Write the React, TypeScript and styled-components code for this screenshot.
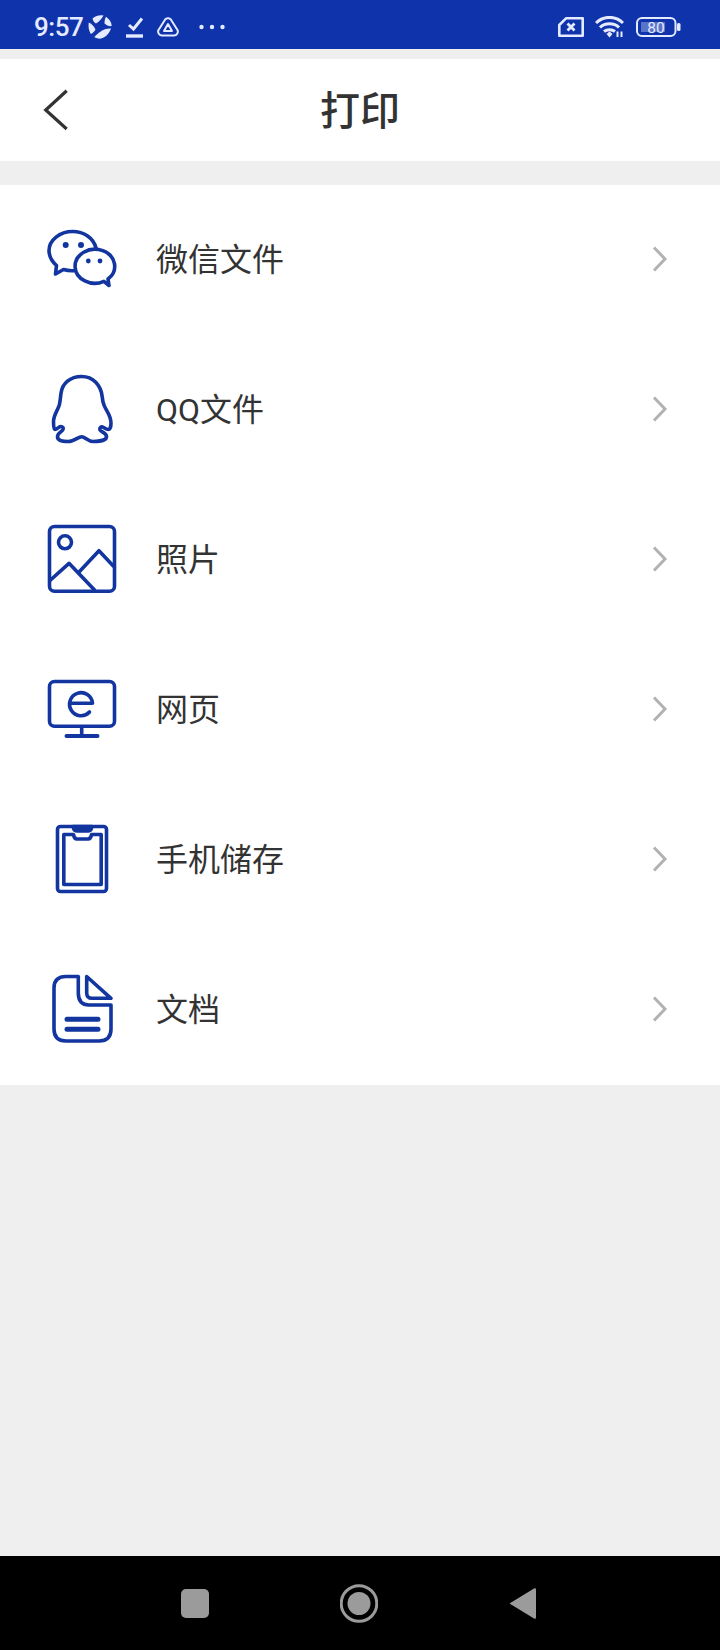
import styled, { createGlobalStyle } from "styled-components";
import { ReactNode } from "react";

const GlobalStyle = createGlobalStyle`
    html, body {
        margin: 0;
        padding: 0;
        background: #efefef;
    }
    * {
        box-sizing: border-box;
    }
`;

const Page = styled.div`
    width: 720px;
    height: 1650px;
    display: flex;
    flex-direction: column;
    background: #efefef;
    font-family: "Noto Sans CJK SC", "Noto Sans", sans-serif;
`;

const StatusBar = styled.div`
    height: 49px;
    flex-shrink: 0;
    display: flex;
    align-items: center;
    justify-content: space-between;
    padding: 4px 39px 0 34px;
    background: #0e33ab;
    color: #e4eaff;
`;

const StatusGroup = styled.div`
    display: flex;
    align-items: center;
`;

const Time = styled.span`
    font-family: Roboto, sans-serif;
    font-size: 26px;
    font-weight: 500;
    letter-spacing: -0.5px;
    margin-right: 5px;
`;

const StatusIcon = styled.svg<{ $gap?: number }>`
    display: block;
    flex-shrink: 0;
    margin-right: ${(p) => p.$gap ?? 0}px;
`;

const Header = styled.header`
    margin-top: 10px;
    height: 102px;
    flex-shrink: 0;
    display: grid;
    grid-template-columns: 1fr auto 1fr;
    align-items: center;
    background: #fff;
`;

const BackButton = styled.button`
    width: 40px;
    height: 50px;
    margin-left: 40px;
    padding: 0;
    border: 0;
    background: none;
`;

const Title = styled.h1`
    margin: 0 0 4px;
    color: #333;
    font-size: 40px;
    font-weight: 500;
    line-height: 1;
`;

const List = styled.div`
    margin-top: 24px;
    background: #fff;
`;

const Row = styled.div`
    height: 150px;
    display: flex;
    align-items: center;
    padding: 0 50px 2px 44px;
`;

const IconBox = styled.svg`
    width: 76px;
    height: 76px;
    flex-shrink: 0;
    fill: none;
    stroke: #12359f;
    stroke-width: 3.6;
    stroke-linecap: round;
    stroke-linejoin: round;
`;

const Label = styled.span`
    flex: 1;
    margin-left: 36px;
    padding-bottom: 4px;
    color: #333;
    font-family: Roboto, "Noto Sans CJK SC", sans-serif;
    font-size: 32px;
    font-weight: 400;
`;

const Chevron = styled.svg`
    width: 20px;
    height: 30px;
    fill: none;
    stroke: #b2b2b2;
    stroke-width: 3;
`;

const Spacer = styled.div`
    flex: 1;
`;

const NavBar = styled.nav`
    height: 94px;
    flex-shrink: 0;
    display: flex;
    align-items: center;
    gap: 131px;
    padding-left: 181px;
    background: #000;
`;

const NavIcon = styled.svg`
    display: block;
    fill: #9b9b9b;
`;

const Dot = styled.circle`
    fill: #12359f;
    stroke: none;
`;

const rows: { label: string; icon: ReactNode }[] = [
    {
        label: "微信文件",
        icon: (
            <>
                <path d="M52 27C49.500 17 40 10.500 28.500 10.500C16 10.500 5 19 5 29.500C5 35.500 7.500 40 12.500 44.500L11.500 53L19.500 48.500C23 49.500 27 50 31 49.500" />
                <path d="M59.900 60.400A19.800 17 0 1 1 64 58L65 64.500Z" />
                <Dot cx="21.700" cy="24" r="3" />
                <Dot cx="37" cy="24" r="3" />
                <Dot cx="44.300" cy="40" r="2.400" />
                <Dot cx="56" cy="40" r="2.400" />
            </>
        ),
    },
    {
        label: "QQ文件",
        icon: (
            <path d="M37.700 5.500C49 5.500 57 14 58.200 25.700C58.500 29 59 31.500 60 34C62 40 67 44 67 52.300C67 56 65.800 58.500 64.300 58.500C61.500 58.500 60 56 57.700 55.700C56 56 55.600 57.500 56 59C57 61 62.500 61.500 62.500 65.700C62.500 69 56 70.500 49.300 70.500C44 70.500 41 65.700 37.700 65.700C34 65.700 30.500 70.500 24.300 70.500C18 70.500 13.500 69.500 13.500 65.700C13.500 61.500 19.500 60.500 19.300 57.300C19 55.800 17.500 55.300 16 55.700C14 56.500 12.800 58.500 11 58.500C10 58.500 9.500 55 9.500 50.700C9.500 44 13.500 40 15.300 34C16.300 30 16.300 27 17 22.300C18.300 12.500 26 5.500 37.700 5.500Z" />
        ),
    },
    {
        label: "照片",
        icon: (
            <>
                <rect x="5.500" y="5.500" width="65" height="64.700" rx="5" />
                <circle cx="21" cy="21.300" r="6.500" />
                <path d="M6.500 59L25 42.300L50.500 69" />
                <path d="M35.300 50.700L55 29.700L69.300 45" />
            </>
        ),
    },
    {
        label: "网页",
        icon: (
            <>
                <rect x="5.500" y="10.500" width="65" height="44.700" rx="5" />
                <path d="M25.500 32.300H48.500A11.500 11.500 0 1 0 45.500 41" />
                <path d="M37.700 55.700V65" />
                <path d="M22.500 65H53.500" strokeWidth="4" />
            </>
        ),
    },
    {
        label: "手机储存",
        icon: (
            <>
                <rect x="13.500" y="5.500" width="49" height="65" rx="3" />
                <path d="M19.800 13.500H29.500Q30 18 33 18H44Q47 18 47.500 13.500H57.200V63.500H19.800Z" />
                <path d="M29 5.500H48Q47 10 44 10H33Q30 10 29 5.500Z" fill="#12359f" />
            </>
        ),
    },
    {
        label: "文档",
        icon: (
            <>
                <path d="M34.300 5.500H22Q10 5.500 10 17V58Q10 70 22 70H55Q67 70 67 58V34H45Q34.300 34 34.300 22Z" />
                <path d="M42.700 5.500L67 27.300H48Q42.700 27.300 42.700 22Z" />
                <path d="M23 48.300H54M23 58.300H54" strokeWidth="5" />
            </>
        ),
    },
];

function App() {
    return (
        <Page>
            <GlobalStyle />
            <StatusBar>
                <StatusGroup>
                    <Time>9:57</Time>
                    <StatusIcon $gap={14} width="24" height="24" viewBox="0 0 24 24" fill="currentColor">
                        <path d="M4.500 3.500C8 .6 12 -.2 15.500 .6C14 3.500 11 7 8 8.500C6.500 8 5 6 4.500 3.500Z" />
                        <path d="M18 1.800C21.500 4 23.500 7.500 23.700 11C21.500 11.500 18.500 10.500 16.500 8.500C16.500 6 17 3.500 18 1.800Z" />
                        <path d="M.8 7.500C3 8.500 6 11 7.500 14.500C6.500 16.500 4.500 18.500 2.800 19C.8 15.500 0 11.500 .8 7.500Z" />
                        <path d="M23 13.500C21.500 18.500 17 23 12 23.700C10 23.700 8 23.200 6.300 22C9 19 13 15.500 17.500 14C19.500 13.500 21.500 13.300 23 13.500Z" />
                    </StatusIcon>
                    <StatusIcon $gap={13} width="18" height="22" viewBox="0 0 18 22" fill="none" stroke="currentColor" strokeWidth="3">
                        <path d="M3 9L7.500 13L16 2.500" />
                        <path d="M0 20H17" strokeWidth="3.400" />
                    </StatusIcon>
                    <StatusIcon $gap={20} width="22" height="20" viewBox="0 0 22 20" fill="none" stroke="currentColor" strokeWidth="2" strokeLinejoin="round">
                        <path d="M8.500 2Q11 .5 13.500 2L20.500 13Q21.500 15 20 17Q19 18.500 17 18.500H5Q3 18.500 2 17Q.5 15 1.500 13Z" />
                        <path d="M11 7L15 14H7Z" />
                    </StatusIcon>
                    <StatusIcon width="26" height="6" viewBox="0 0 26 6" fill="currentColor">
                        <circle cx="2.500" cy="3" r="2.200" />
                        <circle cx="13" cy="3" r="2.200" />
                        <circle cx="23.500" cy="3" r="2.200" />
                    </StatusIcon>
                </StatusGroup>
                <StatusGroup>
                    <StatusIcon $gap={11} width="26" height="20" viewBox="0 0 26 20" fill="none" stroke="currentColor" strokeWidth="2.600" strokeLinejoin="round">
                        <path d="M8 1.300H24.700V18.700H1.300V8Z" />
                        <path d="M9.500 6.500L16.500 13.500M16.500 6.500L9.500 13.500" strokeWidth="2.800" />
                    </StatusIcon>
                    <StatusIcon $gap={12} width="29" height="22" viewBox="0 0 29 22" fill="none" stroke="currentColor" strokeWidth="3">
                        <path d="M1 7C8.500 -.5 20.500 -.5 28 7" />
                        <path d="M5 11.500C10 6.500 19 6.500 24 11.500" />
                        <path d="M9 15.500C12 13 17 13 20 15.500" />
                        <path d="M11.500 18L14.500 15.500L17.500 18L14.500 21.500Z" fill="currentColor" stroke="none" />
                        <path d="M22.500 15.500V21M26.500 15.500V21" strokeWidth="2" />
                    </StatusIcon>
                    <StatusIcon width="45" height="20" viewBox="0 0 45 20">
                        <rect x="1" y="1" width="38.500" height="18" rx="5" fill="none" stroke="currentColor" strokeWidth="2" />
                        <rect x="5" y="5" width="24" height="10" fill="currentColor" opacity="0.35" />
                        <rect x="41" y="6" width="3.500" height="8" rx="1.500" fill="currentColor" />
                        <text x="20" y="15.500" textAnchor="middle" fontFamily="Roboto, sans-serif" fontSize="15.500" fontWeight="400" fill="currentColor">80</text>
                    </StatusIcon>
                </StatusGroup>
            </StatusBar>
            <Header>
                <BackButton>
                    <svg width="40" height="50" viewBox="0 0 40 50" fill="none" stroke="#333" strokeWidth="3.200">
                        <path d="M26.700 5.700L5.700 25L26.700 44" />
                    </svg>
                </BackButton>
                <Title>打印</Title>
            </Header>
            <List>
                {rows.map((row) => (
                    <Row key={row.label}>
                        <IconBox viewBox="0 0 76 76">{row.icon}</IconBox>
                        <Label>{row.label}</Label>
                        <Chevron viewBox="0 0 20 30">
                            <path d="M4 3.500L15 15L4 26.500" />
                        </Chevron>
                    </Row>
                ))}
            </List>
            <Spacer />
            <NavBar>
                <NavIcon width="28" height="29" viewBox="0 0 28 29">
                    <rect width="28" height="29" rx="5" />
                </NavIcon>
                <NavIcon width="38" height="39" viewBox="0 0 38 39">
                    <circle cx="19" cy="19.500" r="17.800" fill="none" stroke="#9b9b9b" strokeWidth="3" />
                    <circle cx="19" cy="19.500" r="11.500" />
                </NavIcon>
                <NavIcon width="27" height="33" viewBox="0 0 27 33">
                    <path d="M0.500 16.500L25 1.500Q27 .5 27 2.500V30.500Q27 32.500 25 31.500Z" />
                </NavIcon>
            </NavBar>
        </Page>
    );
}

export default App;
